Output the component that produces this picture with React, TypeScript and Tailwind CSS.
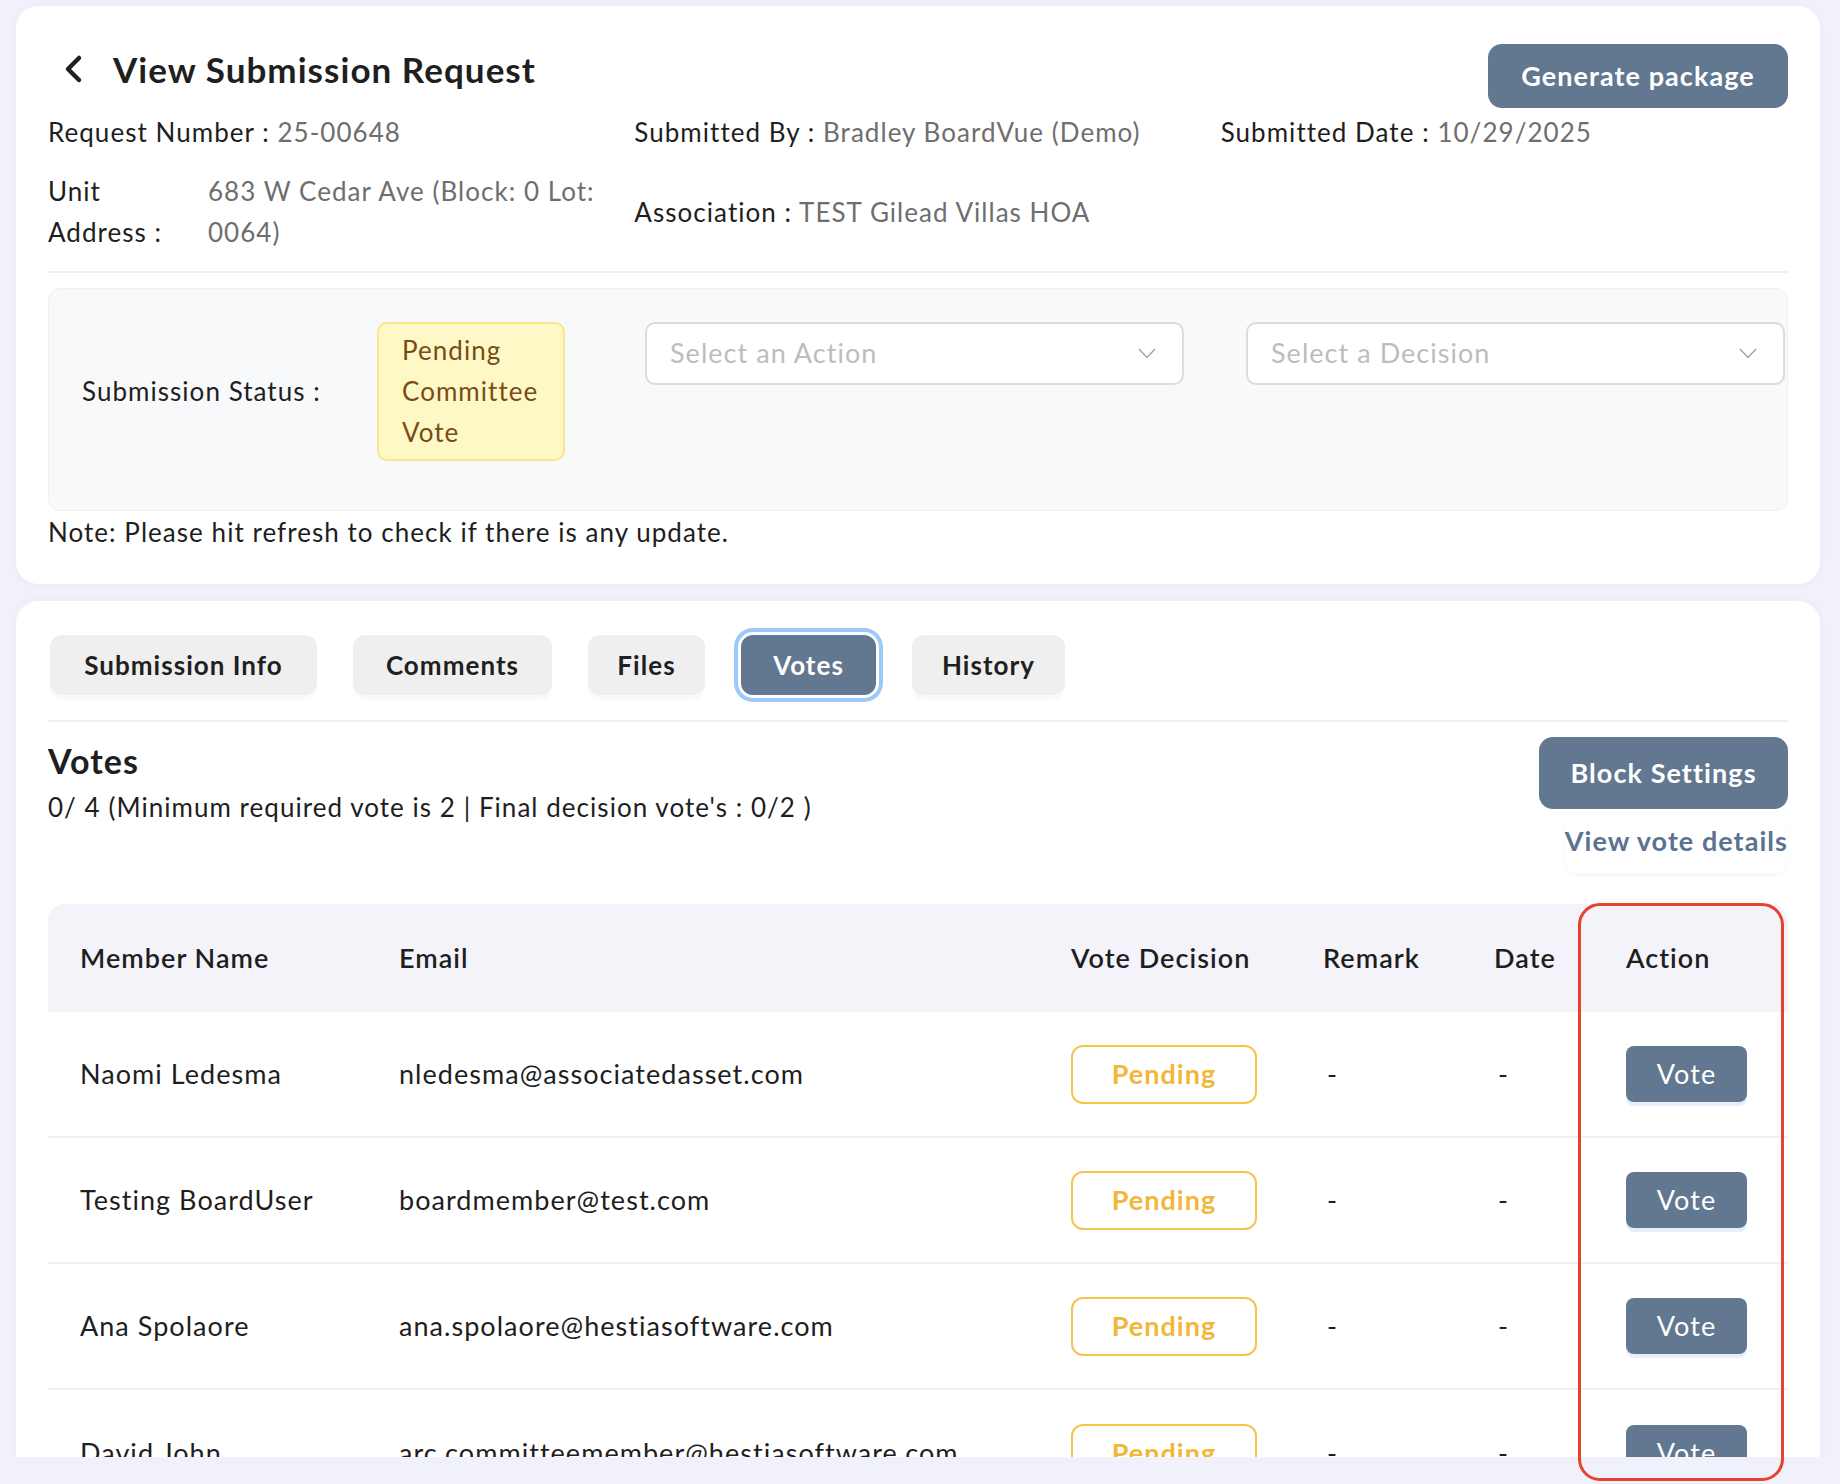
import React from 'react';

const rows = [
  { name: 'Naomi Ledesma', email: 'nledesma@associatedasset.com' },
  { name: 'Testing BoardUser', email: 'boardmember@test.com' },
  { name: 'Ana Spolaore', email: 'ana.spolaore@hestiasoftware.com' },
  { name: 'David John', email: 'arc.committeemember@hestiasoftware.com' },
];

const tabs = [
  { label: 'Submission Info', w: 'w-[267px]' },
  { label: 'Comments', w: 'w-[199px]' },
  { label: 'Files', w: 'w-[117px]' },
  { label: 'Votes', w: 'w-[135px]', active: true },
  { label: 'History', w: 'w-[153px]' },
];

const cols = 'grid grid-cols-[319px_672px_252px_171px_132px_1fr] items-center';

const SelectBox = ({ placeholder }: { placeholder: string }) => (
  <div className="flex h-[63px] w-[539px] items-center justify-between rounded-[10px] border-2 border-[#dcdcdc] bg-white pl-[23px] pr-[26px] text-[27px] text-[#bdbdbd]">
    <span>{placeholder}</span>
    <svg width="18" height="11" viewBox="0 0 18 11" fill="none">
      <polyline points="1,1 9,9.5 17,1" stroke="#a3a3a3" strokeWidth="1.5" />
    </svg>
  </div>
);

export default function App() {
  return (
    <div className="relative h-[1484px] w-[1840px] overflow-hidden bg-[#f0f1fb] font-['Lato','Open_Sans',sans-serif] text-[26px] tracking-[0.04em] text-[#1e1e1e]">
      <div className="flex h-[1457px] flex-col gap-[17px] overflow-hidden pl-4 pr-5 pt-[6px]">
        {/* request header card */}
        <div className="shrink-0 rounded-[22px] bg-white px-8 pb-[31px] pt-[38px] shadow-[0_0_12px_rgba(0,0,0,0.03)]">
          <div className="flex items-start justify-between">
            <div className="mt-[4px] flex items-center">
              <svg className="ml-[15px]" width="20" height="30" viewBox="0 0 20 30" fill="none">
                <polyline points="16,4 5,15 16,26" stroke="#222" strokeWidth="4.5" strokeLinecap="round" strokeLinejoin="round" />
              </svg>
              <h1 className="ml-[30px] text-[35px] font-bold leading-[42px] text-[#1f1f1f]">View Submission Request</h1>
            </div>
            <button className="h-[64px] w-[300px] rounded-[14px] bg-[#627891] text-[27px] font-bold tracking-[0.04em] text-white">
              Generate package
            </button>
          </div>

          <div className="mt-[4px] grid grid-cols-3 gap-x-[19px] gap-y-[18px] leading-[41px]">
            <div className="whitespace-nowrap">
              Request Number : <span className="text-[#6e6e6e]">25-00648</span>
            </div>
            <div className="whitespace-nowrap">
              Submitted By : <span className="text-[#6e6e6e]">Bradley BoardVue (Demo)</span>
            </div>
            <div className="whitespace-nowrap">
              Submitted Date : <span className="text-[#6e6e6e]">10/29/2025</span>
            </div>
            <div className="grid grid-cols-[160px_1fr]">
              <div className="whitespace-nowrap">
                Unit
                <br />
                Address :
              </div>
              <div className="whitespace-nowrap text-[#6e6e6e]">
                683 W Cedar Ave (Block: 0 Lot:
                <br />
                0064)
              </div>
            </div>
            <div className="self-center whitespace-nowrap">
              Association : <span className="text-[#6e6e6e]">TEST Gilead Villas HOA</span>
            </div>
            <div />
          </div>

          <div className="mt-[18px] h-[2px] bg-[#efefef]" />

          <div className="mt-[15px] flex items-start rounded-[12px] border border-[#eef0f3] bg-[#f8f9fb] pb-[49px] pl-[33px] pt-[33px]">
            <div className="flex items-center">
              <div className="w-[295px]">Submission Status :</div>
              <div className="w-[188px] rounded-[10px] border-2 border-[#fde68a] bg-[#fef8c6] px-[23px] py-[6px] leading-[41px] text-[#7a4b14]">
                Pending
                <br />
                Committee
                <br />
                Vote
              </div>
            </div>
            <div className="ml-[80px] flex gap-[62px]">
              <SelectBox placeholder="Select an Action" />
              <SelectBox placeholder="Select a Decision" />
            </div>
          </div>

          <p className="mt-[1px] leading-[41px]">Note: Please hit refresh to check if there is any update.</p>
        </div>

        {/* votes card */}
        <div className="shrink-0 rounded-t-[22px] bg-white px-8 pt-[34px] shadow-[0_0_12px_rgba(0,0,0,0.03)]">
          <div className="flex gap-[36px] pl-[2px]">
            {tabs.map((t) =>
              t.active ? (
                <div
                  key={t.label}
                  className={`flex h-[60px] ${t.w} items-center justify-center rounded-[12px] bg-[#627891] font-bold text-white ring-4 ring-[#9dc9f8] ring-offset-[3px] ring-offset-white`}
                >
                  {t.label}
                </div>
              ) : (
                <div
                  key={t.label}
                  className={`flex h-[60px] ${t.w} items-center justify-center rounded-[12px] bg-[#efefef] font-bold text-[#1f1f1f] shadow-[0_5px_2px_rgba(0,0,0,0.025)]`}
                >
                  {t.label}
                </div>
              )
            )}
          </div>

          <div className="mt-[25px] h-[2px] bg-[#efefef]" />

          <div className="mt-[15px] flex h-[167px] items-start justify-between">
            <div className="pt-[4px]">
              <h2 className="text-[34px] font-bold leading-[40px] text-[#1f1f1f]">Votes</h2>
              <p className="mt-[6px] leading-[41px]">0/ 4 (Minimum required vote is 2 | Final decision vote's : 0/2 )</p>
            </div>
            <div className="flex flex-col items-end">
              <button className="h-[72px] w-[249px] rounded-[14px] bg-[#627891] text-[27px] font-bold tracking-[0.04em] text-white">
                Block Settings
              </button>
              <div className="mt-[11px] rounded-b-[12px] pb-[12px] text-[27px] font-bold leading-[41px] text-[#5b7391] shadow-[0_3px_4px_rgba(0,0,0,0.03)]">
                View vote details
              </div>
            </div>
          </div>

          <div className="overflow-hidden rounded-t-[16px] text-[27px]">
            <div className={`${cols} h-[108px] bg-[#f3f3f9] font-semibold`}>
              <div className="pl-8">Member Name</div>
              <div className="pl-8">Email</div>
              <div className="pl-8">Vote Decision</div>
              <div className="pl-8">Remark</div>
              <div className="pl-8">Date</div>
              <div className="pl-8">Action</div>
            </div>
            <div className="divide-y-2 divide-[#efefef]">
              {rows.map((r) => (
                <div key={r.email} className={`${cols} h-[126px]`}>
                  <div className="whitespace-nowrap pl-8">{r.name}</div>
                  <div className="whitespace-nowrap pl-8">{r.email}</div>
                  <div className="pl-8">
                    <div className="flex h-[59px] w-[186px] items-center justify-center rounded-[12px] border-2 border-[#f5c44d] font-bold text-[#f2b73a]">
                      Pending
                    </div>
                  </div>
                  <div className="pl-9">-</div>
                  <div className="pl-9">-</div>
                  <div className="pl-8">
                    <button className="h-[56px] w-[121px] rounded-[8px] bg-[#627891] text-[27px] tracking-[0.04em] text-white shadow-[0_4px_0_#e6eefb]">
                      Vote
                    </button>
                  </div>
                </div>
              ))}
            </div>
          </div>
        </div>
      </div>

      {/* highlight annotation */}
      <div className="pointer-events-none absolute left-[1578px] top-[903px] h-[578px] w-[206px] rounded-[22px] border-[3px] border-[#e4432c]" />
    </div>
  );
}
